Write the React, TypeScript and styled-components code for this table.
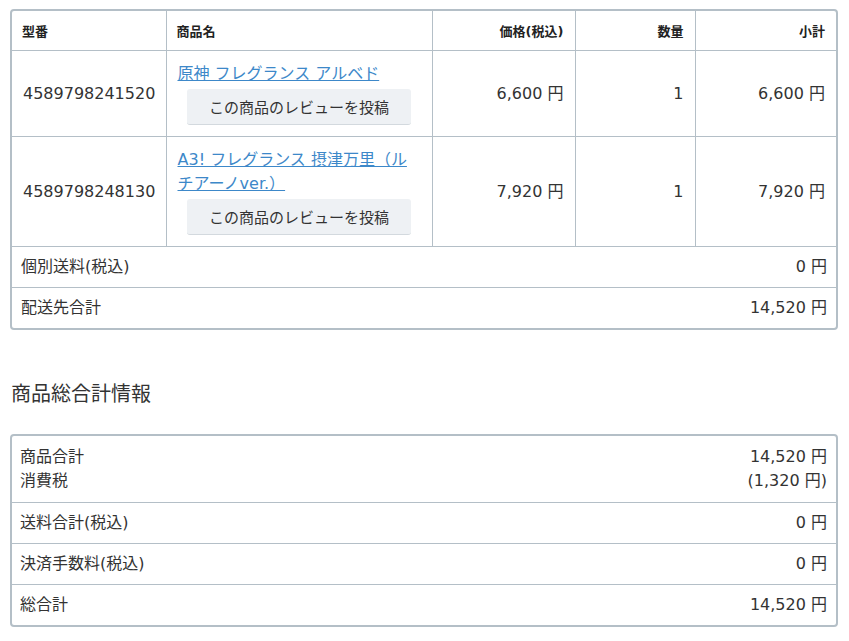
import React from "react";
import styled, { createGlobalStyle } from "styled-components";

const GlobalStyle = createGlobalStyle`
  body {
    margin: 0;
    padding: 9px 11px 0 10px;
    background: #fff;
    color: #333;
    font-family: "DejaVu Sans", "Noto Sans CJK JP", sans-serif;
    font-size: 16px;
  }
`;

const BORDER = "#b4bfc7";

const Box = styled.div`
  border: 2px solid ${BORDER};
  border-radius: 4px;
  overflow: hidden;
`;

const Table = styled.table`
  width: 100%;
  border-collapse: collapse;
  table-layout: fixed;

  tbody tr > * {
    border-top: 1px solid ${BORDER};
  }
  tr > * + * {
    border-left: 1px solid ${BORDER};
  }
`;

const Th = styled.th<{ $right?: boolean }>`
  font-size: 13px;
  font-weight: bold;
  color: #222;
  text-align: ${(p) => (p.$right ? "right" : "left")};
  padding: 11px 11px 9px 10px;
  line-height: 19px;
`;

const Td = styled.td<{ $right?: boolean }>`
  text-align: ${(p) => (p.$right ? "right" : "left")};
  vertical-align: middle;
  padding: 11px 11px 11px 11px;
  line-height: 24px;
`;

const ProductLink = styled.a`
  color: #3d88c9;
  text-decoration: underline;
  display: block;
`;

const ReviewButton = styled.button`
  display: block;
  margin: 3px auto 0;
  width: 224px;
  height: 36px;
  border: none;
  border-bottom: 1px solid #d3d9de;
  border-radius: 3px;
  background: #eef1f4;
  color: #333;
  font-family: inherit;
  font-size: 15px;
  cursor: pointer;
`;

const FooterCell = styled.td`
  padding: 8px 9px 8px 9px;
  line-height: 24px;
`;

const Line = styled.div`
  display: flex;
  justify-content: space-between;
`;

const Heading = styled.h2`
  font-size: 20px;
  font-weight: normal;
  line-height: 30px;
  margin: 49px 0 25px 1px;
  color: #333;
`;

const SummaryRow = styled.div<{ $tall?: boolean }>`
  display: flex;
  justify-content: space-between;
  padding: ${(p) => (p.$tall ? "9px 9px 9px 8px" : "8px 9px 8px 8px")};
  line-height: 24px;

  & + & {
    border-top: 1px solid ${BORDER};
  }
`;

const Stack = styled.div<{ $right?: boolean }>`
  display: flex;
  flex-direction: column;
  align-items: ${(p) => (p.$right ? "flex-end" : "flex-start")};
`;

const items = [
  { code: "4589798241520", name: "原神 フレグランス アルベド", price: "6,600 円", qty: 1, sub: "6,600 円" },
  { code: "4589798248130", name: "A3! フレグランス 摂津万里（ルチアーノver.）", price: "7,920 円", qty: 1, sub: "7,920 円" },
];

export default function App() {
  return (
    <>
      <GlobalStyle />
      <Box>
        <Table>
          <colgroup>
            <col style={{ width: 154 }} />
            <col style={{ width: 266 }} />
            <col style={{ width: 143 }} />
            <col style={{ width: 120 }} />
            <col />
          </colgroup>
          <thead>
            <tr>
              <Th>型番</Th>
              <Th>商品名</Th>
              <Th $right>価格(税込)</Th>
              <Th $right>数量</Th>
              <Th $right>小計</Th>
            </tr>
          </thead>
          <tbody>
            {items.map((it) => (
              <tr key={it.code}>
                <Td>{it.code}</Td>
                <Td>
                  <ProductLink href="#">{it.name}</ProductLink>
                  <ReviewButton>この商品のレビューを投稿</ReviewButton>
                </Td>
                <Td $right>{it.price}</Td>
                <Td $right>{it.qty}</Td>
                <Td $right>{it.sub}</Td>
              </tr>
            ))}
            <tr>
              <FooterCell colSpan={5}>
                <Line>
                  <span>個別送料(税込)</span>
                  <span>0 円</span>
                </Line>
              </FooterCell>
            </tr>
            <tr>
              <FooterCell colSpan={5}>
                <Line>
                  <span>配送先合計</span>
                  <span>14,520 円</span>
                </Line>
              </FooterCell>
            </tr>
          </tbody>
        </Table>
      </Box>

      <Heading>商品総合計情報</Heading>

      <Box>
        <SummaryRow $tall>
          <Stack>
            <span>商品合計</span>
            <span>消費税</span>
          </Stack>
          <Stack $right>
            <span>14,520 円</span>
            <span>(1,320 円)</span>
          </Stack>
        </SummaryRow>
        <SummaryRow>
          <span>送料合計(税込)</span>
          <span>0 円</span>
        </SummaryRow>
        <SummaryRow>
          <span>決済手数料(税込)</span>
          <span>0 円</span>
        </SummaryRow>
        <SummaryRow>
          <span>総合計</span>
          <span>14,520 円</span>
        </SummaryRow>
      </Box>
    </>
  );
}
